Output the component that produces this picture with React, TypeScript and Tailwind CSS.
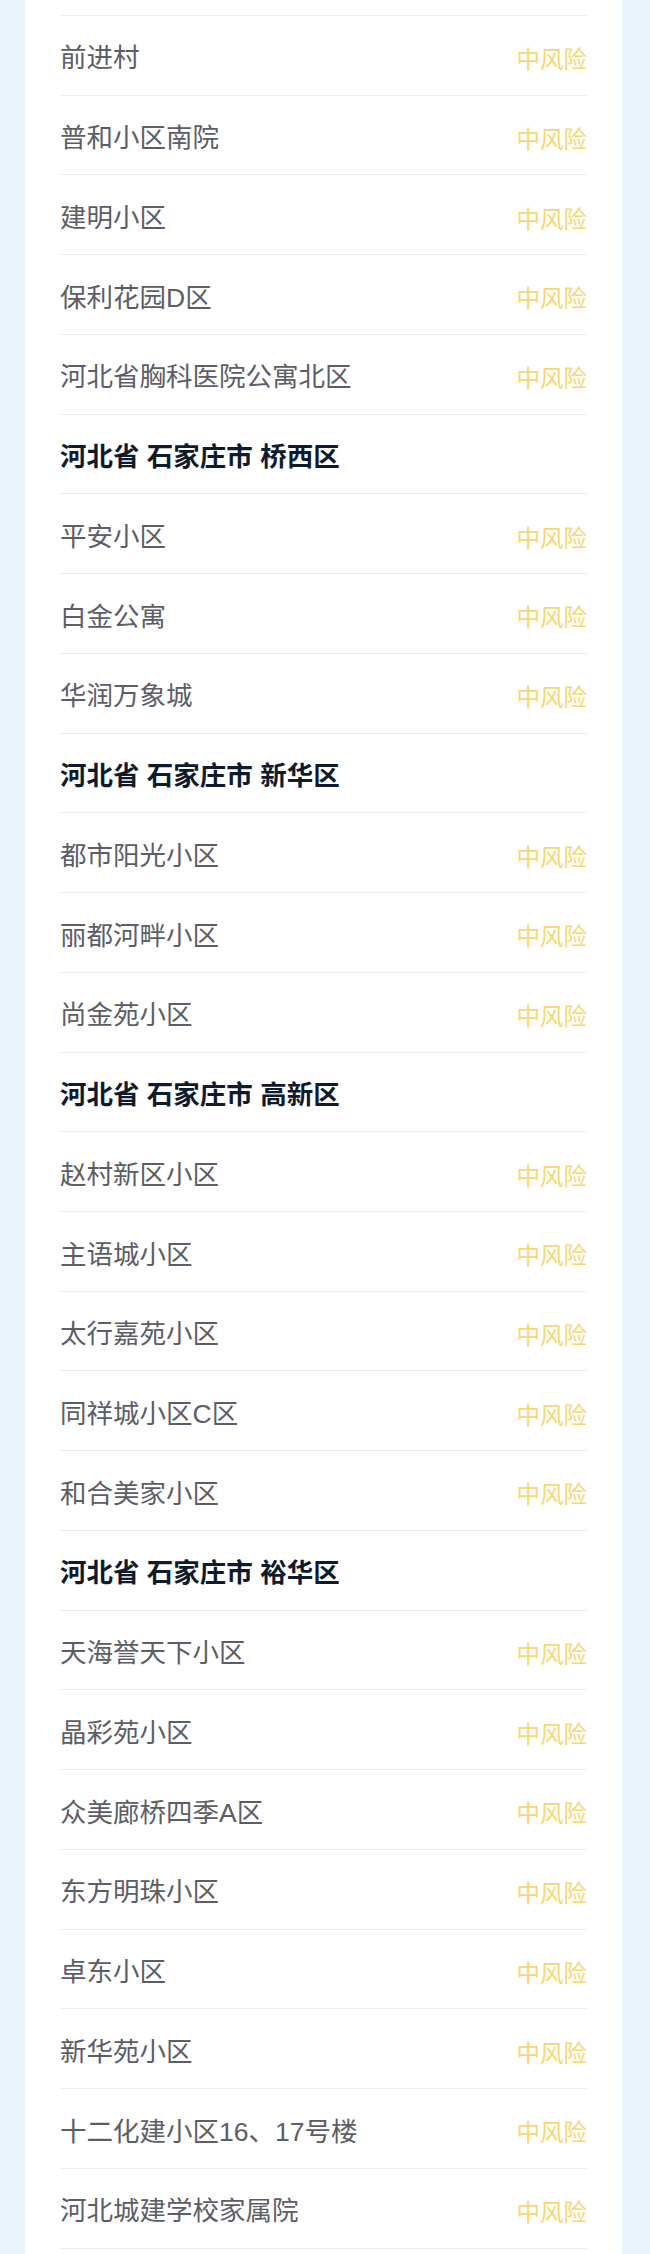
import React from 'react';

type Row = { name: string; header?: boolean };

const rows: Row[] = [
	{ name: '前进村' },
	{ name: '普和小区南院' },
	{ name: '建明小区' },
	{ name: '保利花园D区' },
	{ name: '河北省胸科医院公寓北区' },
	{ name: '河北省 石家庄市 桥西区', header: true },
	{ name: '平安小区' },
	{ name: '白金公寓' },
	{ name: '华润万象城' },
	{ name: '河北省 石家庄市 新华区', header: true },
	{ name: '都市阳光小区' },
	{ name: '丽都河畔小区' },
	{ name: '尚金苑小区' },
	{ name: '河北省 石家庄市 高新区', header: true },
	{ name: '赵村新区小区' },
	{ name: '主语城小区' },
	{ name: '太行嘉苑小区' },
	{ name: '同祥城小区C区' },
	{ name: '和合美家小区' },
	{ name: '河北省 石家庄市 裕华区', header: true },
	{ name: '天海誉天下小区' },
	{ name: '晶彩苑小区' },
	{ name: '众美廊桥四季A区' },
	{ name: '东方明珠小区' },
	{ name: '卓东小区' },
	{ name: '新华苑小区' },
	{ name: '十二化建小区16、17号楼' },
	{ name: '河北城建学校家属院' },
];

const App: React.FC = () => {
	return (
		<div className="min-h-[2254px] bg-[#eaf4fd] px-[25px] font-['Liberation_Sans','Noto_Sans_CJK_SC',sans-serif]">
			<div className="bg-white px-[35px] w-[597px] min-h-[2254px]">
				{/* tail of the previous row */}
				<div className="h-[16px] border-b-[1.5px] border-[#ececec]" />

				{rows.map((row, index) => (
					<div
						key={index}
						className="h-[79.74px] flex items-center justify-between pt-[8px] border-b-[1.5px] border-[#ececec]"
					>
						{row.header ? (
							<span className="text-[26.5px] font-bold text-[#0f1b2c]">{row.name}</span>
						) : (
							<>
								<span className="text-[26.5px] text-[#5c5d66]">{row.name}</span>
								<span className="text-[23.5px] text-[#f8d671] pt-[3px]">中风险</span>
							</>
						)}
					</div>
				))}
			</div>
		</div>
	);
};

export default App;
